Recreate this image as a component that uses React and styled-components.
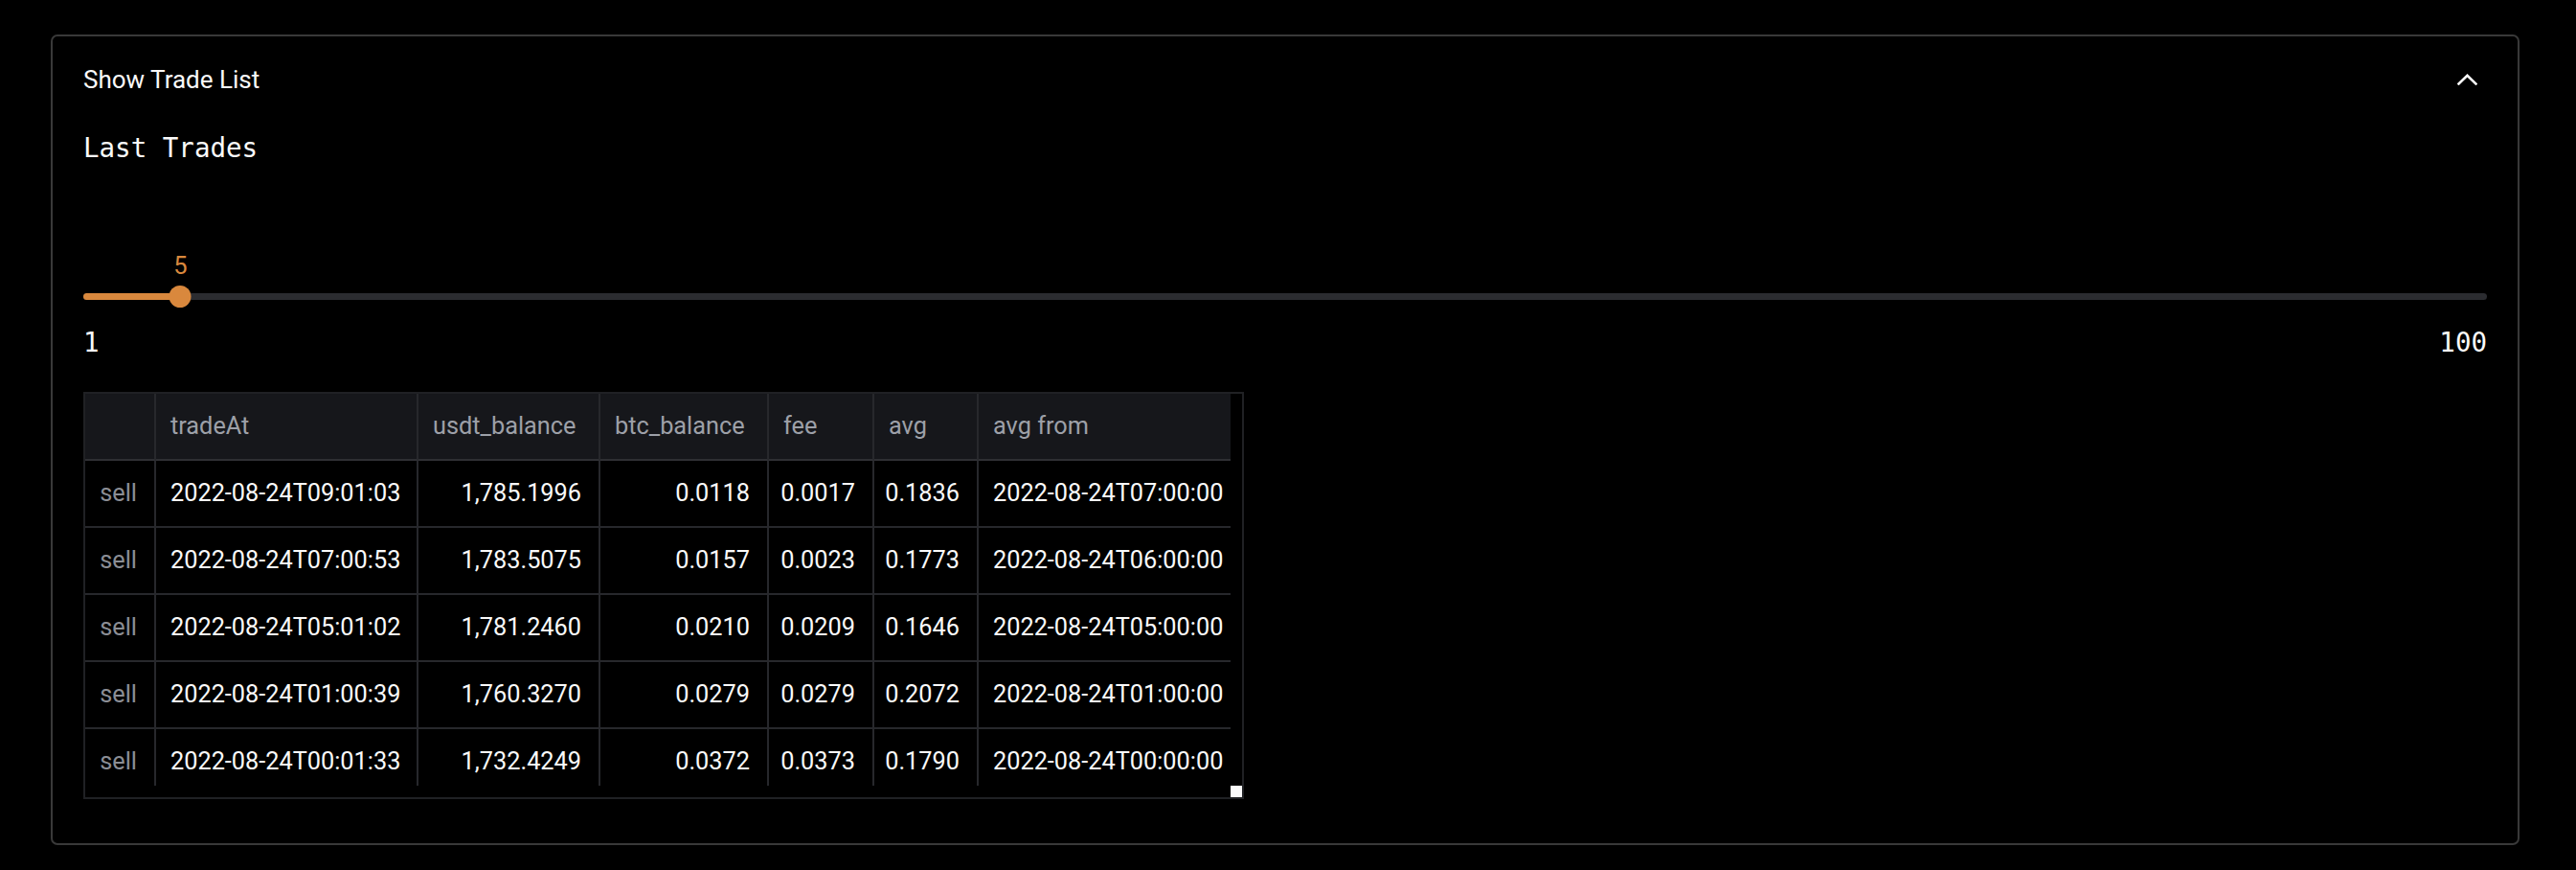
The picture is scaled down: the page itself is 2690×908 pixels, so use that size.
import React from 'react';
import styled, { createGlobalStyle } from 'styled-components';

const GlobalStyle = createGlobalStyle`
  html, body {
    margin: 0;
    padding: 0;
    background: #000;
  }
  body {
    font-family: Roboto, "Noto Sans", sans-serif;
    color: #fafafa;
  }
  * {
    box-sizing: border-box;
  }
`;

const Page = styled.div`
  padding: 36px 59px 26px 53px;
`;

const Expander = styled.div`
  border: 2px solid #393939;
  border-radius: 7px;
  height: 846px;
`;

const Summary = styled.div`
  height: 90px;
  display: flex;
  align-items: center;
  justify-content: space-between;
  padding: 0 42px 0 32px;
  font-size: 26px;
  color: #fafafa;
`;

const Body = styled.div`
  padding: 10px 32px 0 32px;
`;

const CodeTitle = styled.div`
  font-family: "DejaVu Sans Mono", "Liberation Mono", monospace;
  font-size: 27.5px;
  line-height: 33px;
  color: #fafafa;
`;

const SliderBox = styled.div`
  margin-top: 94px;
`;

const ValueRow = styled.div`
  position: relative;
  height: 25px;
`;

const ValueLabel = styled.span`
  position: absolute;
  top: 0;
  transform: translateX(-50%);
  font-size: 25.5px;
  line-height: 25px;
  color: #d9883d;
`;

const TrackArea = styled.div`
  position: relative;
  margin-top: 8px;
  height: 23px;
  display: flex;
  align-items: center;
`;

const Track = styled.div`
  width: 100%;
  height: 7px;
  border-radius: 4px;
  background: #2b2c30;
  overflow: hidden;
`;

const Fill = styled.div`
  height: 100%;
  background: #d9883d;
`;

const Thumb = styled.div`
  position: absolute;
  top: 0;
  width: 23px;
  height: 23px;
  border-radius: 50%;
  background: #d9883d;
  transform: translateX(-50%);
`;

const TickRow = styled.div`
  margin-top: 19.5px;
  display: flex;
  justify-content: space-between;
  font-family: "DejaVu Sans Mono", "Liberation Mono", monospace;
  font-size: 27.5px;
  line-height: 33px;
  color: #fafafa;
`;

const TableFrame = styled.div`
  margin-top: 35px;
  width: 1212px;
  border: 2px solid #202124;
  display: grid;
  grid-template-columns: 1196px 12px;
  grid-template-rows: 409px 12px;
`;

const Viewport = styled.div`
  overflow: hidden;
`;

const Grid = styled.div`
  display: grid;
  grid-template-columns: 74px 274px 190px 176px 110px 109px 263px;
  grid-auto-rows: 70px;
`;

const Cell = styled.div`
  display: flex;
  align-items: center;
  justify-content: ${(p) => (p.$right ? 'flex-end' : 'flex-start')};
  padding: 0 18px 0 15px;
  border-right: ${(p) => (p.$last ? 'none' : '2px solid #27282c')};
  border-bottom: 2px solid #27282c;
  font-size: 25.3px;
  white-space: nowrap;
  overflow: hidden;
  color: ${(p) => (p.$muted ? '#8b8e95' : '#fafafa')};
  background: #000;
`;

const HeadCell = styled(Cell)`
  background: #16171b;
  color: #9da0a8;
  border-bottom-color: #2e2f33;
`;

const Gutter = styled.div``;

const Corner = styled.div`
  display: flex;
  align-items: flex-end;
  justify-content: flex-end;
`;

const Handle = styled.div`
  width: 12px;
  height: 12px;
  background: #fafafa;
`;

const columns = [
  { key: 'idx', label: '', right: true },
  { key: 'tradeAt', label: 'tradeAt' },
  { key: 'usdt', label: 'usdt_balance', right: true },
  { key: 'btc', label: 'btc_balance', right: true },
  { key: 'fee', label: 'fee', right: true },
  { key: 'avg', label: 'avg', right: true },
  { key: 'avgFrom', label: 'avg from' },
];

const trades = [
  ['sell', '2022-08-24T09:01:03', '1,785.1996', '0.0118', '0.0017', '0.1836', '2022-08-24T07:00:00'],
  ['sell', '2022-08-24T07:00:53', '1,783.5075', '0.0157', '0.0023', '0.1773', '2022-08-24T06:00:00'],
  ['sell', '2022-08-24T05:01:02', '1,781.2460', '0.0210', '0.0209', '0.1646', '2022-08-24T05:00:00'],
  ['sell', '2022-08-24T01:00:39', '1,760.3270', '0.0279', '0.0279', '0.2072', '2022-08-24T01:00:00'],
  ['sell', '2022-08-24T00:01:33', '1,732.4249', '0.0372', '0.0373', '0.1790', '2022-08-24T00:00:00'],
];

const ChevronUp = () => (
  <svg width="21" height="12" viewBox="0 0 21 12" fill="none">
    <path d="M1.5 10.5 L10.5 1.8 L19.5 10.5" stroke="#fafafa" strokeWidth="2.6" strokeLinecap="square" />
  </svg>
);

const Slider = ({ min, max, value }) => {
  const pct = ((value - min) / (max - min)) * 100;
  return (
    <SliderBox>
      <ValueRow>
        <ValueLabel style={{ left: `${pct}%` }}>{value}</ValueLabel>
      </ValueRow>
      <TrackArea>
        <Track>
          <Fill style={{ width: `${pct}%` }} />
        </Track>
        <Thumb style={{ left: `${pct}%` }} />
      </TrackArea>
      <TickRow>
        <span>{min}</span>
        <span>{max}</span>
      </TickRow>
    </SliderBox>
  );
};

const TradeTable = () => (
  <TableFrame>
    <Viewport>
      <Grid>
        {columns.map((c, i) => (
          <HeadCell key={c.key} $last={i === columns.length - 1}>
            {c.label}
          </HeadCell>
        ))}
        {trades.map((row, r) =>
          row.map((v, i) => (
            <Cell
              key={`${r}-${i}`}
              $right={columns[i].right}
              $muted={i === 0}
              $last={i === columns.length - 1}
            >
              {v}
            </Cell>
          ))
        )}
      </Grid>
    </Viewport>
    <Gutter />
    <Gutter />
    <Corner>
      <Handle />
    </Corner>
  </TableFrame>
);

export default function App() {
  return (
    <>
      <GlobalStyle />
      <Page>
        <Expander>
          <Summary>
            <span>Show Trade List</span>
            <ChevronUp />
          </Summary>
          <Body>
            <CodeTitle>Last Trades</CodeTitle>
            <Slider min={1} max={100} value={5} />
            <TradeTable />
          </Body>
        </Expander>
      </Page>
    </>
  );
}
